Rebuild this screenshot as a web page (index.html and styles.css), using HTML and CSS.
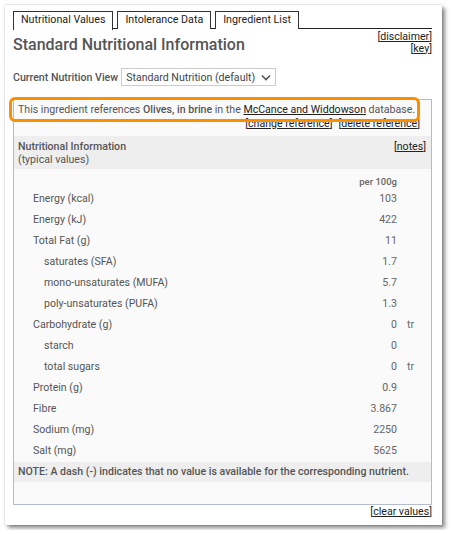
FILE: index.html
```html
<!DOCTYPE html>
<html lang="en">
<head>
  <meta charset="UTF-8" />
  <title>Nutritional Values</title>
  <link rel="stylesheet" href="styles.css">
</head>
<body>
  <div class="card">
    <div class="tabs">
      <div class="tab active">Nutritional Values</div>
      <div class="tab">Intolerance Data</div>
      <div class="tab">Ingredient List</div>
    </div>

    <div class="title-row">
      <h1>Standard Nutritional Information</h1>
      <div class="side-links">
        <span class="blink">[<a href="#">disclaimer</a>]</span>
        <span class="blink">[<a href="#">key</a>]</span>
      </div>
    </div>

    <div class="view-row">
      <span class="view-label">Current Nutrition View</span>
      <div class="select">
        <span>Standard Nutrition (default)</span>
        <svg width="10" height="7" viewBox="0 0 10 7"><path d="M1 1.5 L5 5.5 L9 1.5" fill="none" stroke="#555" stroke-width="1.6"/></svg>
      </div>
    </div>

    <div class="panel">
      <div class="ref-note">
        This ingredient references <b>Olives, in brine</b> in the <a href="#">McCance and Widdowson</a> database.
      </div>
      <div class="ref-links">
        <span class="blink">[<a href="#">change reference</a>]</span>
        <span class="blink">[<a href="#">delete reference</a>]</span>
      </div>

      <div class="nut-head">
        <div>
          <b>Nutritional Information</b><br>
          (typical values)
        </div>
        <span class="blink">[<a href="#">notes</a>]</span>
      </div>

      <div class="nut-table">
        <div class="nut-row colhead"><span></span><span class="val">per 100g</span><span></span></div>
        <div class="nut-row"><span class="lbl">Energy (kcal)</span><span class="val">103</span><span class="unit"></span></div>
        <div class="nut-row"><span class="lbl">Energy (kJ)</span><span class="val">422</span><span class="unit"></span></div>
        <div class="nut-row"><span class="lbl">Total Fat (g)</span><span class="val">11</span><span class="unit"></span></div>
        <div class="nut-row"><span class="lbl sub">saturates (SFA)</span><span class="val">1.7</span><span class="unit"></span></div>
        <div class="nut-row"><span class="lbl sub">mono-unsaturates (MUFA)</span><span class="val">5.7</span><span class="unit"></span></div>
        <div class="nut-row"><span class="lbl sub">poly-unsaturates (PUFA)</span><span class="val">1.3</span><span class="unit"></span></div>
        <div class="nut-row"><span class="lbl">Carbohydrate (g)</span><span class="val">0</span><span class="unit">tr</span></div>
        <div class="nut-row"><span class="lbl sub">starch</span><span class="val">0</span><span class="unit"></span></div>
        <div class="nut-row"><span class="lbl sub">total sugars</span><span class="val">0</span><span class="unit">tr</span></div>
        <div class="nut-row"><span class="lbl">Protein (g)</span><span class="val">0.9</span><span class="unit"></span></div>
        <div class="nut-row"><span class="lbl">Fibre</span><span class="val">3.867</span><span class="unit"></span></div>
        <div class="nut-row"><span class="lbl">Sodium (mg)</span><span class="val">2250</span><span class="unit"></span></div>
        <div class="nut-row"><span class="lbl">Salt (mg)</span><span class="val">5625</span><span class="unit"></span></div>
      </div>

      <div class="note">NOTE: A dash (-) indicates that no value is available for the corresponding nutrient.</div>
    </div>

    <div class="foot-links">
      <span class="blink">[<a href="#">clear values</a>]</span>
    </div>
  </div>
</body>
</html>
```

FILE: styles.css
```css
* {
  margin: 0;
  padding: 0;
  box-sizing: border-box;
}

body {
  font-family: Roboto, "Liberation Sans", Arial, sans-serif;
  font-size: 10.6px;
  color: #555;
  background-color: #fff;
  padding: 5px;
}

b {
  font-weight: 500;
}

a {
  color: #222;
  text-decoration: underline;
}

.blink {
  color: #222;
}

.card {
  width: 437px;
  height: 520px;
  background-color: #fff;
  padding: 6px 10px 0 8px;
  box-shadow: 0 0 2px rgba(0, 0, 0, 0.25), 3px 3px 4px rgba(0, 0, 0, 0.45);
}

.tabs {
  display: flex;
  gap: 4px;
  border-bottom: 1px solid #222;
  height: 18px;
}

.tab {
  height: 18px;
  padding: 0 7px;
  line-height: 16px;
  font-size: 10.7px;
  color: #222;
  border: 1px solid #333;
  border-bottom: none;
  background-color: #fff;
}

.tab.active {
  height: 19px;
}

.title-row {
  display: flex;
  justify-content: space-between;
  align-items: flex-start;
  margin-top: 2px;
  height: 36px;
}

h1 {
  font-size: 16px;
  font-weight: 500;
  color: #555;
  margin-top: 4px;
  line-height: 20px;
}

.side-links {
  display: flex;
  flex-direction: column;
  align-items: flex-end;
  line-height: 11.5px;
}

.view-row {
  display: flex;
  align-items: center;
  gap: 3px;
  margin-top: 1px;
}

.view-label {
  font-weight: 500;
  color: #555;
}

.select {
  display: flex;
  align-items: center;
  gap: 6px;
  height: 18px;
  border: 1px solid #ccc;
  padding: 0 4px 0 4px;
  color: #444;
}

.panel {
  margin-top: 13px;
  height: 406px;
  border: 1px solid #b3bccb;
  background-color: #fafafa;
}

.ref-note {
  position: relative;
  padding: 2px 4px 0;
  line-height: 15px;
  height: 18px;
  color: #555;
}

.ref-note::before {
  content: "";
  position: absolute;
  top: -3px;
  left: -5px;
  right: 11px;
  bottom: -4px;
  border: 3px solid #fb8f00;
  border-radius: 6px;
}

.ref-links {
  display: flex;
  justify-content: flex-end;
  gap: 6px;
  padding-right: 11px;
  line-height: 12px;
}

.nut-head {
  display: flex;
  justify-content: space-between;
  align-items: flex-start;
  margin-top: 6px;
  padding: 4px 5px 3px 4px;
  line-height: 13px;
  background-color: #eee;
}

.nut-head b {
  color: #555;
}

.nut-table {
  padding-top: 5px;
}

.nut-row {
  display: grid;
  grid-template-columns: 1fr 80px 34px;
  height: 21px;
  align-items: center;
}

.nut-row.colhead {
  height: 14px;
  font-size: 9.5px;
  font-weight: 500;
  color: #555;
}

.lbl {
  padding-left: 19px;
  color: #555;
}

.lbl.sub {
  padding-left: 30px;
}

.val {
  text-align: right;
  color: #666;
}

.unit {
  padding-left: 10px;
  color: #666;
}

.note {
  margin-top: 1px;
  padding: 0 4px;
  height: 20px;
  line-height: 20px;
  font-weight: 500;
  background-color: #eee;
  color: #555;
}

.foot-links {
  display: flex;
  justify-content: flex-end;
  line-height: 12px;
  margin-top: 1px;
}
```
